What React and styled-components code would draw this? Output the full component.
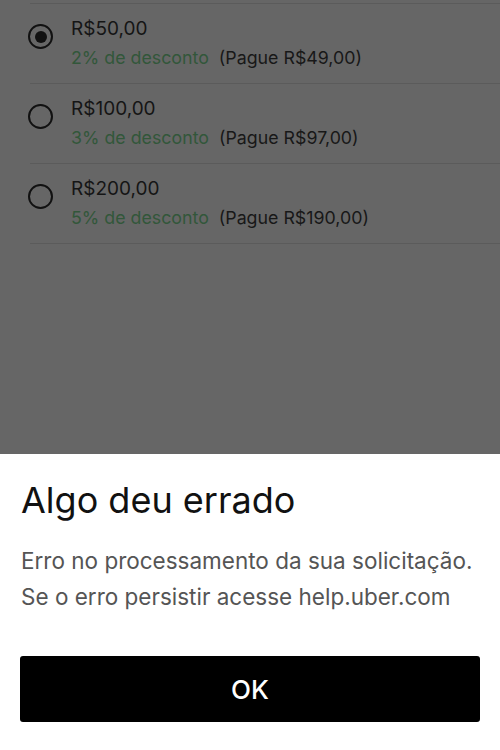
import React, { useState } from "react";
import styled, { createGlobalStyle } from "styled-components";

const GlobalStyle = createGlobalStyle`
  html, body {
    margin: 0;
    padding: 0;
    background: #ffffff;
  }
  body {
    font-family: Inter, "Noto Sans", Roboto, sans-serif;
  }
`;

const Screen = styled.div`
  width: 500px;
  height: 750px;
  display: flex;
  flex-direction: column;
  overflow: hidden;
`;

const Backdrop = styled.div`
  flex: 1;
  background: #666666;
  padding-top: 3px;
`;

const OptionList = styled.div`
  display: flex;
  flex-direction: column;
  margin-left: 30px;
`;

const Option = styled.label`
  display: flex;
  align-items: flex-start;
  border-top: 1px solid #5b5b5b;
  padding: 12px 0 11px 0;
  cursor: pointer;
`;

const Radio = styled.span`
  box-sizing: border-box;
  width: 25px;
  height: 25px;
  margin: 8px 18px 0 -2px;
  border: 2.5px solid #111111;
  border-radius: 50%;
  display: flex;
  align-items: center;
  justify-content: center;
  flex-shrink: 0;

  &::after {
    content: "";
    width: 12px;
    height: 12px;
    border-radius: 50%;
    background: #111111;
    display: ${(p) => (p.$checked ? "block" : "none")};
  }
`;

const OptionText = styled.div`
  display: flex;
  flex-direction: column;
`;

const Amount = styled.span`
  font-size: 19px;
  line-height: 26px;
  color: #151515;
`;

const Discount = styled.div`
  margin-top: 2px;
  font-size: 17.8px;
  line-height: 28px;
  display: flex;
  gap: 10px;
`;

const Green = styled.span`
  color: #32573a;
`;

const Pay = styled.span`
  color: #181818;
`;

const Sheet = styled.div`
  background: #ffffff;
  padding: 24px 20px 28px 21px;
  display: flex;
  flex-direction: column;
`;

const Title = styled.h1`
  margin: 0;
  font-size: 36px;
  font-weight: 400;
  line-height: 44px;
  color: #111111;
`;

const Message = styled.p`
  margin: 21px 0 0 0;
  font-size: 22.5px;
  line-height: 36px;
  color: #555555;
`;

const OkButton = styled.button`
  margin: 41px 0 0 -1px;
  height: 66px;
  width: 460px;
  border: none;
  border-radius: 3px;
  background: #000000;
  color: #ffffff;
  font-family: inherit;
  font-size: 26px;
  font-weight: 500;
  cursor: pointer;
`;

const options = [
  { amount: "R$50,00", discount: "2% de desconto", pay: "(Pague R$49,00)" },
  { amount: "R$100,00", discount: "3% de desconto", pay: "(Pague R$97,00)" },
  { amount: "R$200,00", discount: "5% de desconto", pay: "(Pague R$190,00)" },
];

export default function App() {
  const [selected, setSelected] = useState(0);

  return (
    <Screen>
      <GlobalStyle />
      <Backdrop>
        <OptionList>
          {options.map((o, i) => (
            <Option key={o.amount} onClick={() => setSelected(i)}>
              <Radio $checked={selected === i} />
              <OptionText>
                <Amount>{o.amount}</Amount>
                <Discount>
                  <Green>{o.discount}</Green>
                  <Pay>{o.pay}</Pay>
                </Discount>
              </OptionText>
            </Option>
          ))}
          <Option as="div" />
        </OptionList>
      </Backdrop>
      <Sheet>
        <Title>Algo deu errado</Title>
        <Message>
          Erro no processamento da sua solicitação.
          <br />
          Se o erro persistir acesse help.uber.com
        </Message>
        <OkButton>OK</OkButton>
      </Sheet>
    </Screen>
  );
}
